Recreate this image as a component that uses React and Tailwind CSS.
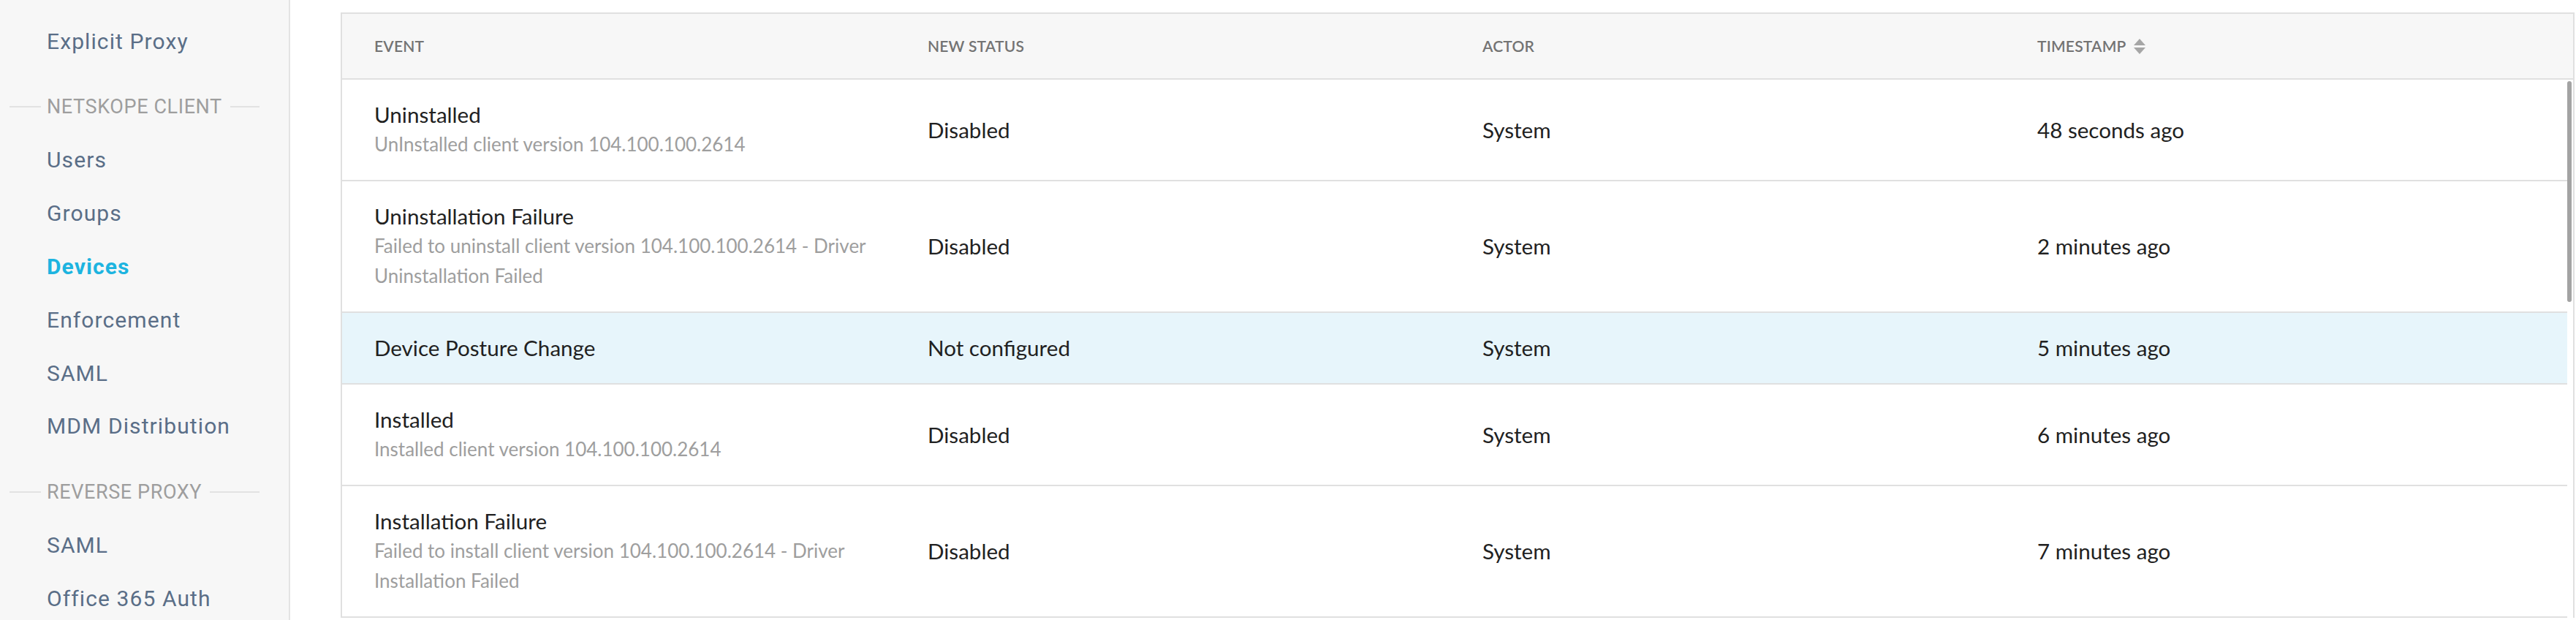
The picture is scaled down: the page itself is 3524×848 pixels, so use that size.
import React from "react";

const navTop = ["Explicit Proxy"];
const clientItems = ["Users", "Groups", "Devices", "Enforcement", "SAML", "MDM Distribution"];
const reverseItems = ["SAML", "Office 365 Auth"];

function NavItem({ label, active }) {
  return (
    <div
      className={
        "h-[72.8px] flex items-center pl-[64px] text-[30px] tracking-[1.1px] font-[Roboto,sans-serif] " +
        (active ? "text-[#1db4e0] font-bold" : "text-[#5a6e87]")
      }
    >
      {label}
    </div>
  );
}

function SectionHeader({ label }) {
  return (
    <div className="mt-[17px] h-[72.8px] flex items-center ml-[13px] w-[342px]">
      <div className="w-[43px] h-[2px] bg-[#e2e2e2]" />
      <div className="ml-[8px] mr-[11px] text-[27px] tracking-[0.6px] text-[#9e9e9e] font-[Roboto,sans-serif] whitespace-nowrap">
        {label}
      </div>
      <div className="flex-1 h-[2px] bg-[#e2e2e2]" />
    </div>
  );
}

const rows = [
  {
    title: "Uninstalled",
    desc: "UnInstalled client version 104.100.100.2614",
    status: "Disabled",
    actor: "System",
    time: "48 seconds ago",
  },
  {
    title: "Uninstallation Failure",
    desc: "Failed to uninstall client version 104.100.100.2614 - Driver Uninstallation Failed",
    status: "Disabled",
    actor: "System",
    time: "2 minutes ago",
  },
  {
    title: "Device Posture Change",
    desc: null,
    status: "Not configured",
    actor: "System",
    time: "5 minutes ago",
    active: true,
  },
  {
    title: "Installed",
    desc: "Installed client version 104.100.100.2614",
    status: "Disabled",
    actor: "System",
    time: "6 minutes ago",
  },
  {
    title: "Installation Failure",
    desc: "Failed to install client version 104.100.100.2614 - Driver Installation Failed",
    status: "Disabled",
    actor: "System",
    time: "7 minutes ago",
  },
];

function SortIcon() {
  return (
    <svg width="16" height="21" viewBox="0 0 16 21" className="ml-[10px]">
      <polygon points="8,0 16,9 0,9" fill="#a6a6a6" />
      <polygon points="0,12 16,12 8,21" fill="#a6a6a6" />
    </svg>
  );
}

export default function App() {
  return (
    <div className="flex h-[848px] w-full overflow-hidden bg-white font-[Lato,sans-serif]">
      <aside className="w-[397px] shrink-0 bg-[#f7f7f7] border-r-2 border-[#e4e4e4] pt-[20px]">
        {navTop.map((l) => (
          <NavItem key={l} label={l} />
        ))}
        <SectionHeader label="NETSKOPE CLIENT" />
        {clientItems.map((l) => (
          <NavItem key={l} label={l} active={l === "Devices"} />
        ))}
        <SectionHeader label="REVERSE PROXY" />
        {reverseItems.map((l) => (
          <NavItem key={l} label={l} />
        ))}
      </aside>

      <main className="flex-1 pl-[69px] pt-[17px] pr-[2px]">
        <div className="border-t-2 border-l-2 border-r-2 border-[#e0e0e0]">
          <div className="grid grid-cols-[757px_759px_759px_1fr] h-[90px] items-center bg-[#f7f7f7] border-b-2 border-[#e0e0e0] text-[21px] font-semibold text-[#737373] tracking-[0.2px]">
            <div className="pl-[44px]">EVENT</div>
            <div className="pl-[44px]">NEW STATUS</div>
            <div className="pl-[44px]">ACTOR</div>
            <div className="pl-[44px] flex items-center">
              TIMESTAMP
              <SortIcon />
            </div>
          </div>

          <div className="flex">
            <div className="flex-1">
              {rows.map((r, i) => (
                <div
                  key={i}
                  className={
                    "grid grid-cols-[757px_759px_759px_1fr] items-center pt-[27px] pb-[28px] border-b-2 border-[#e0e0e0] text-[29.6px] text-[#212121] " +
                    (r.active ? "bg-[#e7f5fb]" : "bg-white")
                  }
                >
                  <div className="pl-[44px] pr-[30px]">
                    <div className="leading-[41px]">{r.title}</div>
                    {r.desc && (
                      <div className="leading-[41px] text-[26px] text-[#9e9e9e]">{r.desc}</div>
                    )}
                  </div>
                  <div className="pl-[44px] leading-[41px]">{r.status}</div>
                  <div className="pl-[44px] leading-[41px]">{r.actor}</div>
                  <div className="pl-[44px] leading-[41px]">{r.time}</div>
                </div>
              ))}
            </div>
            <div className="w-[8px] shrink-0 pt-[2px]">
              <div className="w-[6px] h-[302px] rounded-full bg-[#a3a3a3]" />
            </div>
          </div>
        </div>
      </main>
    </div>
  );
}
